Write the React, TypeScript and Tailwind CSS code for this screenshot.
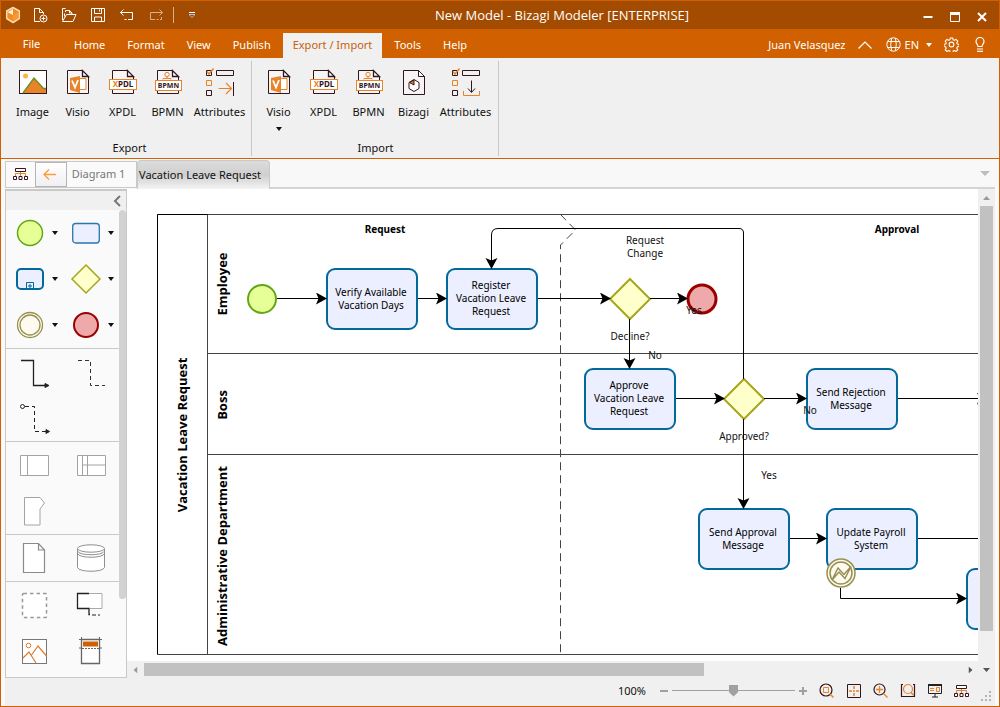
import type { ReactNode } from "react";

const INK = "#33151c";
const ORANGE = "#e8832a";

/* ---------- small glyphs ---------- */

function Caret({ className = "" }: { className?: string }) {
  return (
    <svg className={className} width="6" height="4" viewBox="0 0 6 4" fill="currentColor">
      <path d="M0 0h6L3 4z" />
    </svg>
  );
}

function ScrollArrow({ className = "" }: { className?: string }) {
  return (
    <svg className={`shrink-0 ${className}`} width="7" height="4" viewBox="0 0 7 4" fill="currentColor">
      <path d="M0 0h7L3.500 4z" />
    </svg>
  );
}

function LogoIcon() {
  return (
    <svg width="16" height="18" viewBox="0 0 16 18">
      <path d="M8 1.500 14.300 5v7.500L8 16.500l-6.300-4V5z" fill="#f58a1f" stroke="#ffd9ae" strokeWidth="1.500" strokeLinejoin="round" />
      <path d="M8 9V3L2.500 6.200z" fill="#fff3e2" />
      <path d="M8 9 13.500 6v6L8 15.500z" fill="#f7983a" />
    </svg>
  );
}

function NewIcon() {
  return (
    <svg width="16" height="16" viewBox="0 0 16 16" fill="none" stroke="#fff">
      <path d="M8 14.500H2.500v-13h5l4 4V7M7.500 1.500v4h4" />
      <circle cx="11.500" cy="11.500" r="3.500" />
      <path d="M11.500 9.500v4M9.500 11.500h4" />
    </svg>
  );
}

function OpenIcon() {
  return (
    <svg width="16" height="16" viewBox="0 0 16 16" fill="none" stroke="#fff">
      <path d="M1.500 13V1.500h3M4.500 5V3.500h4l2.500 2.500v1M1.500 14.500h10.500l3-7H5.500z" />
      <path d="M8.500 3.500V6H11M3.500 6.500v3" />
    </svg>
  );
}

function SaveIcon() {
  return (
    <svg width="14" height="14" viewBox="0 0 14 14" fill="none" stroke="#fff">
      <path d="M.5.5h13v13H.500zM3.500.500v5h7v-5M3.500 13.500v-4.500h7v4.500M8.500 1.500v2" />
    </svg>
  );
}

function UndoIcon() {
  return (
    <svg width="16" height="14" viewBox="0 0 16 14" fill="none" stroke="#fff">
      <path d="M4.500 1.500 1.500 4.500l3 3M1.500 4.500h12v7H9M7.500 11.500h-2" />
    </svg>
  );
}

function RedoIcon() {
  return (
    <svg width="16" height="14" viewBox="0 0 16 14" fill="none" stroke="#d9b08c">
      <path d="m11.500 1.500 3 3-3 3M14.500 4.500h-12v7H7M8.500 11.500h2M12 11.500h1.500V9" />
    </svg>
  );
}

function GlobeIcon() {
  return (
    <svg width="15" height="15" viewBox="0 0 15 15" fill="none" stroke="#fff">
      <circle cx="7.500" cy="7.500" r="6.700" />
      <path d="M5.500 1.500q-1.500 6 0 12M9.500 1.500q1.500 6 0 12M1.500 4.500h12M1.500 10.500h12" />
    </svg>
  );
}

function GearIcon() {
  return (
    <svg width="15" height="15" viewBox="0 0 24 24" fill="none" stroke="#fff" strokeWidth="1.700" strokeLinejoin="round">
      <circle cx="12" cy="12" r="3.800" />
      <path d="M10 1.500h4l.6 3 2 .9 2.600-1.700 2.900 2.900-1.700 2.600.8 2 3 .6v3.400l-3 .6-.8 2 1.700 2.600-2.900 2.900-2.600-1.700-2 .9-.6 3h-4l-.6-3-2-.9-2.600 1.700-2.900-2.900 1.700-2.600-.8-2-3-.6v-3.400l3-.6.8-2-1.700-2.600 2.900-2.900 2.600 1.700 2-.9z" />
    </svg>
  );
}

function BulbIcon() {
  return (
    <svg width="10" height="15" viewBox="0 0 10 15" fill="none" stroke="#fff" strokeWidth="1.200">
      <path d="M3 9.500C3 7.500 1 6.800 1 4.500a4 4 0 0 1 8 0C9 6.800 7 7.500 7 9.500zM2 12h6" />
      <path d="M2 14.300h6" />
    </svg>
  );
}

/* ---------- ribbon icons ---------- */

function PageOutline() {
  return (
    <>
      <path d="M3.500 2.500h15l6 6v17h-21z" fill="#f6f4f5" stroke={INK} />
      <path d="M18.500 2.500v6h6z" fill="#fff" stroke={INK} strokeWidth="1.300" />
    </>
  );
}

function ImageIcon() {
  return (
    <svg width="28" height="28" viewBox="0 0 28 28">
      <rect x=".5" y="2.500" width="27" height="23" fill="#fff" stroke={INK} />
      <circle cx="6.500" cy="8" r="2.500" fill="#ffb23e" />
      <path d="M4 25 15 10l10 11h2v4z" fill={ORANGE} />
      <path d="M4 25 15 10l9.500 10.500H27" fill="none" stroke="#6a8f1e" strokeWidth="1.300" />
    </svg>
  );
}

function VisioIcon() {
  return (
    <svg width="28" height="28" viewBox="0 0 28 28">
      <PageOutline />
      <path d="M16 10.500h6v11h-6" fill="#fff" stroke={ORANGE} />
      <path d="M6 10 16 8v17L6 22z" fill={ORANGE} />
      <path d="m8 12.500 3 7 3-7.500" fill="none" stroke="#fff" strokeWidth="1.800" />
    </svg>
  );
}

function XpdlIcon() {
  return (
    <svg width="28" height="28" viewBox="0 0 28 28">
      <PageOutline />
      <rect x=".5" y="11.500" width="27" height="10" fill="#fff" stroke={ORANGE} />
      <text x="14" y="19" textAnchor="middle" className="text-[8px] font-bold" fill={INK}>
        <tspan fill={ORANGE}>X</tspan>PDL
      </text>
    </svg>
  );
}

function BpmnIcon() {
  return (
    <svg width="28" height="28" viewBox="0 0 28 28">
      <PageOutline />
      <circle cx="13" cy="6.500" r="2.200" fill="none" stroke={ORANGE} />
      <path d="M13 9v2M9 11.500v-1h8v1" fill="none" stroke={ORANGE} />
      <rect x="1.500" y="12.500" width="26" height="10" fill="#fff" stroke={ORANGE} />
      <text x="14.500" y="20" textAnchor="middle" className="text-[7px] font-bold" fill={INK}>
        BPMN
      </text>
    </svg>
  );
}

function BizagiIcon() {
  return (
    <svg width="28" height="28" viewBox="0 0 28 28">
      <g fill="#f6f4f5" stroke={INK}>
        <path d="M3.500 2.500h15l6 6v18h-21z" />
        <path d="M18.500 2.500v6h6z" fill="#fff" />
        <path d="m14 11.500 5 3v6l-5 3-5-3v-6z" fill="#fff" />
        <path d="M14 12v5l-4.500-2.500z" fill={ORANGE} />
      </g>
    </svg>
  );
}

function AttributeBoxes() {
  return (
    <g fill="none">
      <path d="M.5 2.500h5v5h-5zM.5 22.500h5v5h-5z" stroke={INK} />
      <path d="M10.500 2.500h17v5h-17z" stroke={INK} />
      <path d="M.5 12.500h5v5h-5z" stroke={ORANGE} />
      <path d="m1 3.500 2 2.500L7.500.5" stroke={ORANGE} strokeWidth="1.500" />
    </g>
  );
}

function AttributesOutIcon() {
  return (
    <svg width="28" height="28" viewBox="0 0 28 28" fill="none">
      <AttributeBoxes />
      <path d="M12.500 20.500H25M20 15l5.500 5.500L20 26" stroke={ORANGE} strokeWidth="1.200" />
      <path d="M27.500 14v14" stroke={INK} />
    </svg>
  );
}

function AttributesInIcon() {
  return (
    <svg width="28" height="28" viewBox="0 0 28 28" fill="none">
      <AttributeBoxes />
      <path d="M19.500 12.500V24M16 20.500l3.500 4 3.500-4" stroke={INK} />
      <path d="M11.500 23v4.500h16V23" stroke={ORANGE} />
    </svg>
  );
}

function TreeIcon() {
  return (
    <svg width="15" height="12" viewBox="0 0 15 12" fill="none">
      <path d="M2.500 8V5.500h10V8M7.500 3v5" stroke={ORANGE} />
      <path d="M2.500.5h10v3h-10zM.5 8.500h3v3h-3zM6 8.500h3v3H6zM11.500 8.500h3v3h-3z" stroke={INK} fill="#fff" />
    </svg>
  );
}

/* ---------- palette icons ---------- */

const palette: { label: string; menu?: boolean; icon: ReactNode }[][] = [
  [
    {
      label: "Start event",
      menu: true,
      icon: <circle cx="14" cy="14" r="12.500" fill="#e6ff97" stroke="#62a716" strokeWidth="1.500" />,
    },
    {
      label: "Task",
      menu: true,
      icon: <rect x=".7" y="4.500" width="26.600" height="19.500" rx="3" fill="#ecefff" stroke="#2b76ab" strokeWidth="1.300" />,
    },
    {
      label: "Sub-process",
      menu: true,
      icon: (
        <g fill="#ecefff" stroke="#03689a">
          <rect x="1" y="4" width="26" height="20" rx="4" strokeWidth="2" />
          <path d="M10.500 17.500h7v6h-7zM14 19v4M12 21h4" />
        </g>
      ),
    },
    {
      label: "Gateway",
      menu: true,
      icon: <path d="M14 0 28 14 14 28 0 14z" fill="#ffffcc" stroke="#a6a61d" strokeWidth="1.500" />,
    },
    {
      label: "Intermediate event",
      menu: true,
      icon: (
        <g fill="#fefaef" stroke="#969050">
          <circle cx="14" cy="14" r="12.500" strokeWidth="1.300" />
          <circle cx="14" cy="14" r="10" strokeWidth="1.300" />
        </g>
      ),
    },
    {
      label: "End event",
      menu: true,
      icon: <circle cx="14" cy="14" r="12" fill="#eeaaaa" stroke="#990000" strokeWidth="2" />,
    },
  ],
  [
    {
      label: "Sequence flow",
      icon: (
        <g stroke="#222">
          <path d="M1 2.500h12.500v25H27" fill="none" strokeWidth="1.300" />
          <path d="m25 25.500 4 2-4 2z" fill="#222" />
        </g>
      ),
    },
    { label: "Association", icon: <path d="M1 2.500h12.500v25H28" fill="none" stroke="#333" strokeDasharray="4 3" /> },
    {
      label: "Message flow",
      icon: (
        <g fill="none" stroke="#222">
          <circle cx="2.500" cy="2.500" r="2" />
          <path d="M5 2.500h9.500v25H27" strokeDasharray="4 3" />
          <path d="m26 25.500 3.500 2-3.500 2z" fill="#222" />
        </g>
      ),
    },
  ],
  [
    { label: "Pool", icon: <path d="M.5 4.500h28v20H.5zM7.500 4.500v20" fill="#fff" stroke="#a3a3a3" /> },
    { label: "Lane", icon: <path d="M.5 4.500h28v20H.5zM5.500 4.500v20M10.500 4.500v20M5 14h23.500" fill="#fff" stroke="#a3a3a3" /> },
    { label: "Milestone", icon: <path d="M4.500.5H20l4.500 5.500-4.500 6v16H4.500z" fill="#fff" stroke="#a3a3a3" /> },
  ],
  [
    {
      label: "Data object",
      icon: <path d="M3.500-.5h15l6 6.500v22.500h-21zM18.500-.5V6h6" fill="#fff" stroke="#8a8a8a" strokeWidth="1.200" />,
    },
    {
      label: "Data store",
      icon: (
        <g fill="#fff" stroke="#8f8f8f">
          <path d="M.5 4.500v19c1.500 5 25.500 5 27 0v-19" />
          <ellipse cx="14" cy="4.500" rx="13.500" ry="3.700" />
          <path d="M.5 7c1.500 5 25.500 5 27 0M.5 9.500c1.500 5 25.500 5 27 0" fill="none" />
        </g>
      ),
    },
  ],
  [
    {
      label: "Group",
      icon: <rect x="2.500" y="2.500" width="24" height="24" rx="1" fill="#fff" stroke="#999" strokeWidth="1.500" strokeDasharray="3.500 3" />,
    },
    {
      label: "Annotation",
      icon: (
        <g fill="none">
          <path d="M12 2.500h13v15H12" fill="#fff" stroke="#aaa" />
          <path d="M12 2.500H.5v15H12v6h1" fill="#fff" stroke="#222" strokeWidth="1.300" />
          <path d="M15 24h8" stroke="#222" strokeDasharray="4 2" />
        </g>
      ),
    },
    {
      label: "Image",
      icon: (
        <g fill="none">
          <rect x="2.500" y="2.500" width="24" height="24" fill="#fff" stroke="#777" />
          <path d="m3 21 6-6 7 11M11.500 18 18 9l8.500 10" stroke="#e07b28" strokeWidth="1.200" />
          <circle cx="8.500" cy="8.500" r="2.300" stroke="#e07b28" />
        </g>
      ),
    },
    {
      label: "Header",
      icon: (
        <g fill="none" stroke="#666">
          <path d="M4.500 2.500h18v24h-18z" fill="#fff" strokeWidth="1.300" />
          <path d="M6 4.500h15v5H6z" fill="#d06000" stroke="none" />
          <path d="M5 11.500h17" strokeDasharray="2 1" />
          <path d="M2 2.500h2M23 2.500h2M4.500 0v2M22.500 0v2M2 11h2M23 11h2" />
        </g>
      ),
    },
  ],
];

/* ---------- diagram ---------- */

const tasks: { x: number; y: number; lines: string[] }[] = [
  { x: 200, y: 80, lines: ["Verify Available", "Vacation Days"] },
  { x: 320, y: 80, lines: ["Register", "Vacation Leave", "Request"] },
  { x: 458, y: 180, lines: ["Approve", "Vacation Leave", "Request"] },
  { x: 680, y: 180, lines: ["Send Rejection", "Message"] },
  { x: 572, y: 320, lines: ["Send Approval", "Message"] },
  { x: 700, y: 320, lines: ["Update Payroll", "System"] },
  { x: 840, y: 380, lines: [] },
];

const flows = [
  "M150 109.500H199",
  "M291 109.500H319",
  "M411 109.500H483",
  "M523 109.500H560",
  "M502.500 130V179",
  "M549 209.500H597",
  "M637 209.500H679",
  "M771 209.500H860",
  "M616.500 190V44q0-4.500-4.500-4.500H371q-6.500 0-6.500 6.500V79",
  "M616.500 230V319",
  "M663 349.500H699",
  "M791 349.500H1000",
  "M713.500 399V409.500H839",
];

const notes = [
  { x: 518, y: 55, text: "Request" },
  { x: 518, y: 68, text: "Change" },
  { x: 503, y: 151, text: "Decline?" },
  { x: 528, y: 170, text: "No" },
  { x: 567, y: 125, text: "Yes" },
  { x: 683, y: 225, text: "No" },
  { x: 617, y: 251, text: "Approved?" },
  { x: 642, y: 290, text: "Yes" },
];

const lanes = [
  { x: 60, y: 246, text: "Vacation Leave Request" },
  { x: 100, y: 95, text: "Employee" },
  { x: 100, y: 216, text: "Boss" },
  { x: 100, y: 367, text: "Administrative Department" },
];

function Diagram() {
  return (
    <svg width="1400" height="520" viewBox="0 0 1400 520" className="block max-w-none shrink-0 text-[10px]" role="img" aria-label="Vacation Leave Request process">
      <defs>
        <marker id="arrow" markerUnits="userSpaceOnUse" markerWidth="12" markerHeight="14" refX="10" refY="6" orient="auto">
          <path d="M0 0 11 6 0 12 2.500 6z" fill="#000" />
        </marker>
      </defs>

      {/* pool, lanes and milestone */}
      <g fill="none" stroke="#444">
        <path d="M30.500 25.500H1300V465.500H30.500M80.500 25.500v440M80.500 164.500H1300M80.500 265.500H1300" />
        <path d="M80.500 25.500h-50v440" stroke="#000" />
        <path d="m433.500 25.500 15 15.500-15 15v409" strokeDasharray="8 5" />
      </g>
      <g className="font-['Open_Sans',sans-serif] text-[13px] font-bold" textAnchor="middle">
        {lanes.map((l) => (
          <text key={l.text} transform={`translate(${l.x} ${l.y}) rotate(-90)`}>
            {l.text}
          </text>
        ))}
      </g>
      <g className="font-bold" textAnchor="middle">
        <text x="258" y="44">Request</text>
        <text x="770" y="44">Approval</text>
      </g>

      {tasks.map((t) => (
        <g key={t.x} textAnchor="middle">
          <rect x={t.x} y={t.y} width="90" height="60" rx="8" fill="#ecefff" stroke="#03689a" strokeWidth="2" />
          {t.lines.map((line, i) => (
            <text key={line} x={t.x + 44} y={Math.round(t.y + 33 + (i - (t.lines.length - 1) / 2) * 13)}>
              {line}
            </text>
          ))}
        </g>
      ))}

      {/* events and gateways */}
      <circle cx="135" cy="110" r="14" fill="#e6ff97" stroke="#62a716" strokeWidth="2" />
      <circle cx="575" cy="110" r="14" fill="#eeaaaa" stroke="#990000" strokeWidth="3" />
      <g fill="#ffffcc" stroke="#a6a61d" strokeWidth="2">
        <path d="m503 90 20 20-20 20-20-20z" />
        <path d="m617 190 20 20-20 20-20-20z" />
      </g>
      <g fill="#fefaef" stroke="#969050" strokeWidth="1.500">
        <circle cx="714" cy="384" r="14" />
        <circle cx="714" cy="384" r="11" />
        <path d="m705 391 6-12 6 6.500 7-8-6 12-6-6.500z" />
      </g>

      <g fill="none" stroke="#000">
        {flows.map((d) => (
          <path key={d} d={d} markerEnd="url(#arrow)" />
        ))}
      </g>
      <g textAnchor="middle" fill="#111">
        {notes.map((n) => (
          <text key={`${n.x}-${n.y}`} x={n.x} y={n.y}>
            {n.text}
          </text>
        ))}
      </g>
    </svg>
  );
}

/* ---------- chrome ---------- */

const quickActions = [
  { label: "New", icon: <NewIcon /> },
  { label: "Open", icon: <OpenIcon /> },
  { label: "Save", icon: <SaveIcon /> },
  { label: "Undo", icon: <UndoIcon /> },
  { label: "Redo", icon: <RedoIcon /> },
];

const menu = ["Home", "Format", "View", "Publish", "Export / Import", "Tools", "Help"];

const exportItems = [
  { label: "Image", icon: <ImageIcon /> },
  { label: "Visio", icon: <VisioIcon /> },
  { label: "XPDL", icon: <XpdlIcon /> },
  { label: "BPMN", icon: <BpmnIcon /> },
  { label: "Attributes", icon: <AttributesOutIcon /> },
];

const importItems = [
  { label: "Visio", icon: <VisioIcon />, menu: true },
  { label: "XPDL", icon: <XpdlIcon /> },
  { label: "BPMN", icon: <BpmnIcon /> },
  { label: "Bizagi", icon: <BizagiIcon /> },
  { label: "Attributes", icon: <AttributesInIcon /> },
];

function TitleBar() {
  return (
    <header className="flex h-7 shrink-0 items-center bg-[#a34b00] text-white">
      <div className="flex w-[209px] items-center">
        <span className="flex w-6 justify-center">
          <LogoIcon />
        </span>
        {quickActions.map((a) => (
          <button key={a.label} aria-label={a.label} className="flex w-[29px] justify-center">
            {a.icon}
          </button>
        ))}
        <span className="ml-[3px] h-4 w-px bg-[#d9b08c]" />
        <button aria-label="Customize quick access" className="flex w-9 justify-center">
          <svg width="6" height="6" viewBox="0 0 6 6">
            <path d="M0 .5h6" stroke="#fff" />
            <path d="M0 2.500h6L3 5.500z" fill="#4a5a70" stroke="#fff" strokeWidth=".6" />
          </svg>
        </button>
      </div>
      <h1 className="flex-1 text-center font-['Open_Sans',sans-serif] text-[13px]">New Model - Bizagi Modeler [ENTERPRISE]</h1>
      <div className="flex w-[85px] items-center pt-1 pr-1">
        <button aria-label="Minimize" className="flex flex-1 justify-center">
          <svg width="10" height="10" viewBox="0 0 10 10">
            <path d="M.5 5h9" stroke="#fff" strokeWidth="2" />
          </svg>
        </button>
        <button aria-label="Maximize" className="flex flex-1 justify-center">
          <svg width="10" height="10" viewBox="0 0 10 10" fill="none" stroke="#fff">
            <path d="M.5.5h9v9h-9z" />
            <path d="M0 1.500h10" strokeWidth="3" />
          </svg>
        </button>
        <button aria-label="Close" className="flex flex-1 justify-center">
          <svg width="10" height="10" viewBox="0 0 10 10">
            <path d="m1 1 8 8M9 1 1 9" stroke="#fff" strokeWidth="2" />
          </svg>
        </button>
      </div>
    </header>
  );
}

function MenuBar() {
  return (
    <nav className="flex h-[29px] shrink-0 items-end gap-[2px] bg-[#d06000] text-white">
      <button className="h-[27px] w-[61px] pb-[2px]">File</button>
      {menu.map((item) => (
        <button
          key={item}
          className={
            item === "Export / Import" ? "h-[25px] bg-[#f0f0f0] px-[10px] pb-[2px] text-[#c85f0a]" : "h-[25px] px-[10px] pb-[2px]"
          }
        >
          {item}
        </button>
      ))}
      <div className="ml-auto flex h-[25px] items-center pb-[2px]">
        <button>Juan Velasquez</button>
        <button aria-label="Collapse ribbon" className="ml-3">
          <svg width="14" height="8" viewBox="0 0 14 8" fill="none" stroke="#fff" strokeWidth="1.200">
            <path d="m.5 7.500 6.500-6.500 6.500 6.500" />
          </svg>
        </button>
        <button className="ml-[14px] flex items-center gap-1">
          <GlobeIcon />
          EN
          <Caret className="ml-[3px]" />
        </button>
        <button aria-label="Settings" className="ml-3">
          <GearIcon />
        </button>
        <button aria-label="Help tips" className="mr-[14px] ml-4">
          <BulbIcon />
        </button>
      </div>
    </nav>
  );
}

function RibbonGroup({
  title,
  items,
  className,
}: {
  title: string;
  items: { label: string; icon: ReactNode; menu?: boolean }[];
  className: string;
}) {
  return (
    <section className={`mt-[3px] mb-[2px] flex flex-col justify-between border-r border-[#c8c8c8] pt-[7px] ${className}`}>
      <div className="flex items-start">
        {items.map((item) => (
          <button
            key={item.label}
            className={`flex flex-col items-center ${item.label === "Attributes" ? "w-[59px]" : "w-[45px]"}`}
          >
            {item.icon}
            <span className="mt-2 leading-4">{item.label}</span>
            {item.menu && <Caret className="mt-[7px]" />}
          </button>
        ))}
      </div>
      <h2 className="text-center leading-4">{title}</h2>
    </section>
  );
}

function DocumentTabs() {
  return (
    <div className="flex h-[30px] shrink-0 items-end bg-[#f8f8f8] px-1">
      <div className="flex h-[27px] items-center self-center border border-[#c9c9c9] bg-[#fafafa]">
        <button aria-label="Diagram tree" className="flex w-[29px] justify-center">
          <TreeIcon />
        </button>
        <button
          aria-label="Back"
          className="flex h-full w-8 items-center justify-center border border-[#b5b5b5] bg-linear-to-b from-white to-[#f0f0f4] pr-[3px]"
        >
          <svg width="13" height="11" viewBox="0 0 13 11" fill="none" stroke="#ff9a3c" strokeWidth="1.300">
            <path d="M6 .5 1 5.500l5 5M1 5.500h12" />
          </svg>
        </button>
        <button className="w-[69px] pr-[6px] text-[#777]">Diagram 1</button>
      </div>
      <button className="h-[29px] w-[133px] rounded-t-sm border-x border-t border-[#c9c9c9] bg-linear-to-b from-[#dcdcdc] via-[#cfcfcf] to-[#f4f4f4] pr-[7px]">
        Vacation Leave Request
      </button>
      <div className="flex h-full flex-1 items-center justify-end border-b-2 border-[#d4d4d4] pr-[5px]">
        <button aria-label="More tabs" className="text-[#bdbdbd]">
          <svg width="10" height="5" viewBox="0 0 10 5" fill="currentColor">
            <path d="M0 0h10L5 5z" />
          </svg>
        </button>
      </div>
    </div>
  );
}

function Palette() {
  return (
    <aside className="flex w-[122px] shrink-0 flex-col border border-t-2 border-[#c9c9c9] bg-[#fafafa]">
      <div className="flex h-[19px] shrink-0 items-center justify-end bg-[#f0f0f0] pr-[5px]">
        <button aria-label="Collapse palette">
          <svg width="8" height="12" viewBox="0 0 8 12" fill="none" stroke="#777" strokeWidth="2">
            <path d="M7 1 2 6l5 5" />
          </svg>
        </button>
      </div>
      <div className="flex min-h-0 flex-1">
        <div className="min-h-0 flex-1 overflow-hidden">
          {palette.map((section, i) => (
            <div key={i} className="grid grid-cols-2 border-t border-[#c9c9c9] first:border-t-0">
              {section.map((tool) => (
                <button
                  key={tool.label}
                  aria-label={tool.label}
                  className={
                    tool.menu
                      ? "flex h-[46px] items-center justify-end gap-2 pr-[5px]"
                      : "flex h-[46px] items-center justify-center"
                  }
                >
                  <svg width="28" height="28" viewBox="0 0 28 28" className="overflow-visible">
                    {tool.icon}
                  </svg>
                  {tool.menu && <Caret />}
                </button>
              ))}
            </div>
          ))}
        </div>
        <div className="w-[7px]">
          <div className="h-5/6 rounded-full bg-[#d2d2d2]" />
        </div>
      </div>
    </aside>
  );
}

function Workspace() {
  return (
    <main className="flex min-w-0 flex-1 flex-col">
      <div className="flex min-h-0 flex-1">
        <div className="min-w-0 flex-1 overflow-hidden bg-white">
          <Diagram />
        </div>
        <div className="flex w-[17px] flex-col items-center bg-[#f0f0f0] text-[#9a9a9a]">
          <ScrollArrow className="mt-[7px] mb-[6px] rotate-180" />
          <div className="h-[90%] w-[13px] bg-[#c1c1c1]" />
        </div>
      </div>
      <div className="flex h-[17px] shrink-0 items-center bg-[#f0f0f0] text-[#555]">
        <ScrollArrow className="mx-[5px] rotate-90 text-[#9a9a9a]" />
        <div className="flex-1">
          <div className="h-[13px] w-[68%] bg-[#c1c1c1]" />
        </div>
        <ScrollArrow className="mr-1 -rotate-90" />
        <ScrollArrow className="mx-[5px]" />
      </div>
    </main>
  );
}

const viewButtons: { label: string; icon: ReactNode }[] = [
  {
    label: "Zoom to selection",
    icon: (
      <>
        <circle cx="7" cy="7" r="6" stroke={INK} strokeWidth="1.200" />
        <path d="M4.500 4.500h5v5h-5z" stroke={ORANGE} />
        <path d="m11 11 3.500 3.500" stroke={ORANGE} strokeWidth="1.500" />
      </>
    ),
  },
  {
    label: "Fit to page",
    icon: (
      <>
        <path d="M1.500 1.500h13v13h-13z" stroke={INK} />
        <path d="M8 3v3M8 10v3M3 8h3M10 8h3M7 8h2" stroke={ORANGE} strokeWidth="1.500" />
      </>
    ),
  },
  {
    label: "Zoom in",
    icon: (
      <>
        <circle cx="6.500" cy="6.500" r="5.500" stroke={INK} strokeWidth="1.200" />
        <path d="M6.500 3v7M3 6.500h7M10.500 10.500l4 4" stroke={ORANGE} strokeWidth="1.300" />
      </>
    ),
  },
  {
    label: "Zoom to area",
    icon: (
      <>
        <path d="M3 1.500H1.500v12h13v-12H13" stroke={INK} strokeWidth="1.200" />
        <circle cx="8" cy="6" r="4.500" stroke={ORANGE} strokeWidth="1.200" />
        <path d="m11 9.500 3 3" stroke={ORANGE} strokeWidth="1.500" />
      </>
    ),
  },
  {
    label: "Presentation",
    icon: (
      <>
        <path d="M1.500 2.500h13v8h-13zM5 14h6M8 11v3" stroke="#222" />
        <path d="M1 2h14" stroke="#222" strokeWidth="2" />
        <path d="M3 5.500h4M3 7.500h4M9.500 4.500h3v4h-3z" stroke={ORANGE} />
      </>
    ),
  },
];

function StatusBar() {
  return (
    <footer className="flex h-7 shrink-0 items-center justify-end bg-[#f0f0f0] pb-[3px]">
      <label htmlFor="zoom">100%</label>
      <button aria-label="Zoom out" className="ml-[14px] h-[2px] w-2 bg-[#a0a0a0]" />
      <input
        id="zoom"
        type="range"
        min="0"
        max="200"
        defaultValue="100"
        className="mr-1 ml-1 h-4 w-[123px] appearance-none bg-transparent bg-[linear-gradient(#a0a0a0,#a0a0a0)] bg-[length:100%_1px] bg-center bg-no-repeat [&::-webkit-slider-thumb]:h-3 [&::-webkit-slider-thumb]:w-[9px] [&::-webkit-slider-thumb]:appearance-none [&::-webkit-slider-thumb]:bg-[#a0a0a0] [&::-webkit-slider-thumb]:[clip-path:polygon(0_0,100%_0,100%_65%,50%_100%,0_65%)]"
      />
      <button aria-label="Increase zoom">
        <svg width="8" height="8" viewBox="0 0 8 8" stroke="#a0a0a0" strokeWidth="2">
          <path d="M0 4h8M4 0v8" />
        </svg>
      </button>
      <div className="ml-3 flex items-center gap-[11px]">
        {viewButtons.map((b) => (
          <button key={b.label} aria-label={b.label}>
            <svg width="16" height="16" viewBox="0 0 16 16" fill="none">
              {b.icon}
            </svg>
          </button>
        ))}
        <button aria-label="Diagram map">
          <TreeIcon />
        </button>
      </div>
      <svg width="12" height="12" viewBox="0 0 12 12" className="mr-[2px] ml-3 self-end" fill="#b5b5ac">
        <path d="M0 8h2v2H0zM4 8h2v2H4zM8 8h2v2H8zM4 4h2v2H4zM8 4h2v2H8zM8 0h2v2H8z" />
      </svg>
    </footer>
  );
}

export default function App() {
  return (
    <div className="flex h-screen flex-col overflow-hidden border border-[#d06000] bg-[#fafafa] font-['Noto_Sans','Open_Sans',sans-serif] text-[11px] leading-4 text-[#111]">
      <TitleBar />
      <MenuBar />
      <div className="flex h-[101px] shrink-0 border-b border-[#d06000] bg-[#f0f0f0]">
        <RibbonGroup title="Export" items={exportItems} className="pr-[2px] pl-[9px]" />
        <RibbonGroup title="Import" items={importItems} className="pr-[3px] pl-1" />
      </div>
      <DocumentTabs />
      <div className="flex min-h-0 flex-1 px-1">
        <Palette />
        <Workspace />
      </div>
      <div className="px-1">
        <StatusBar />
      </div>
    </div>
  );
}
